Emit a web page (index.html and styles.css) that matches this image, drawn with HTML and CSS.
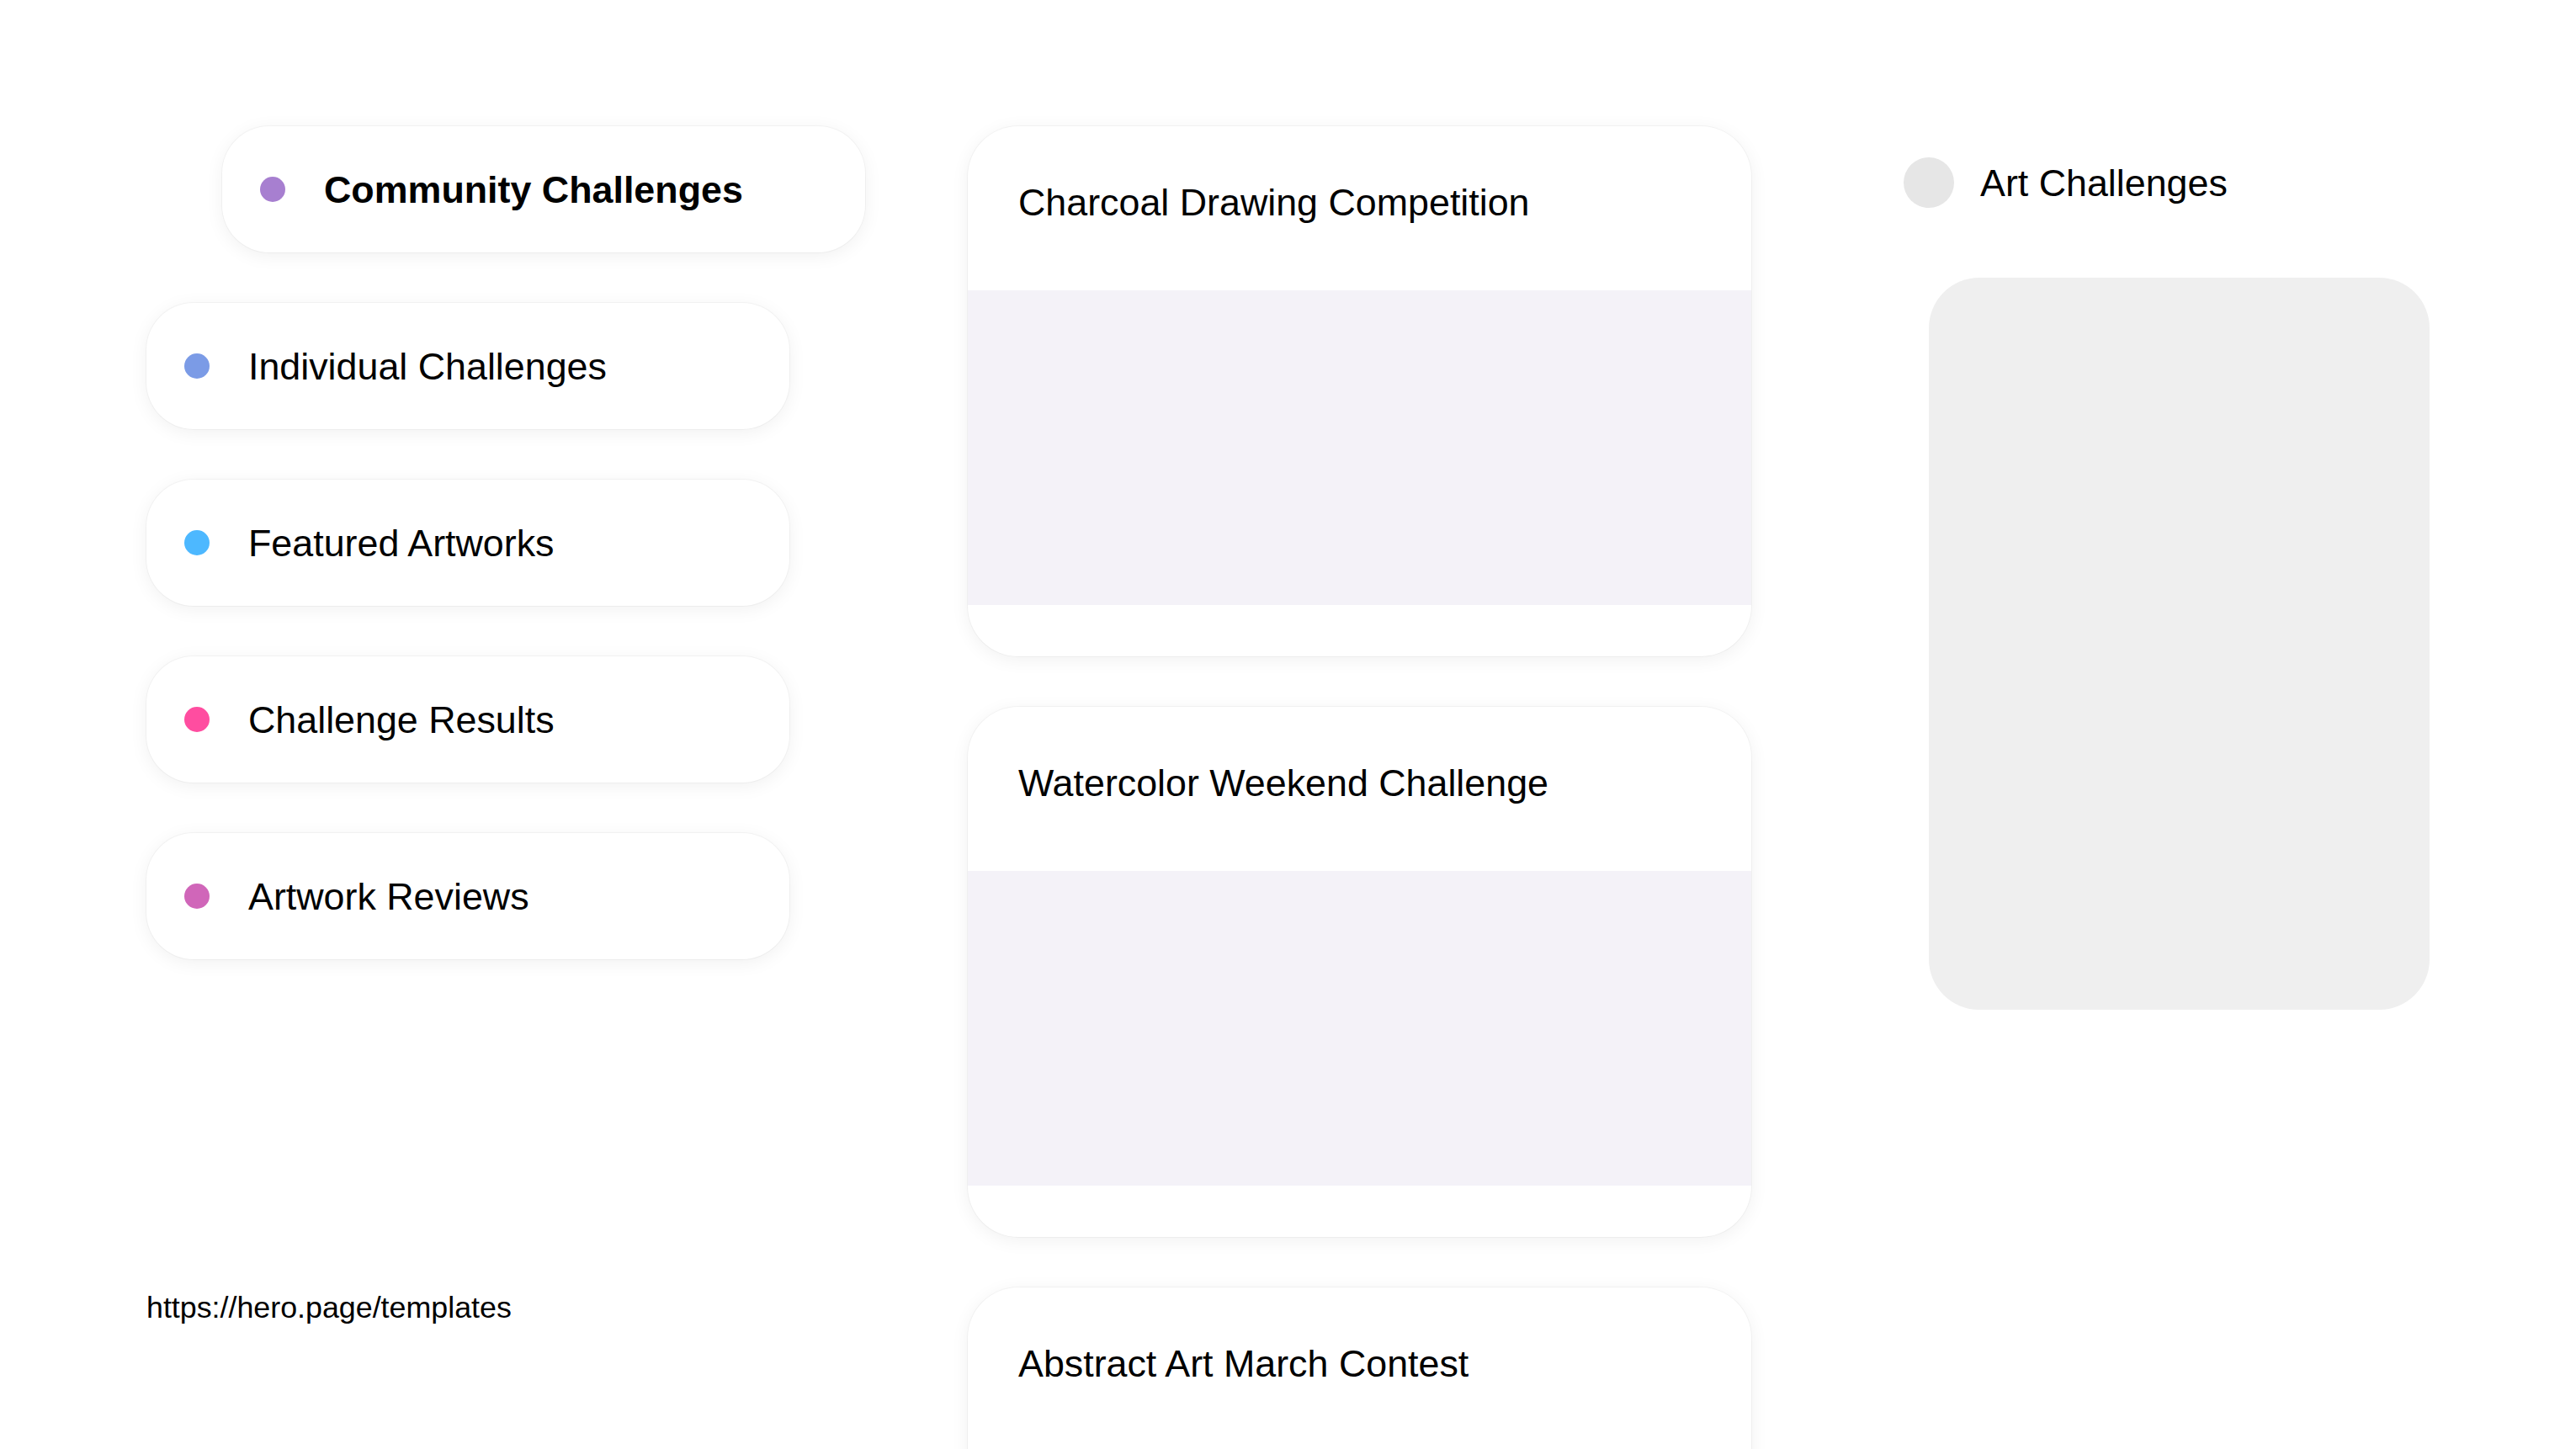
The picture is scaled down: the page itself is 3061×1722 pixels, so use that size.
FILE: index.html
```html
<!DOCTYPE html>
<html lang="en">
<head>
<meta charset="utf-8">
<title>Art Challenges</title>
<link rel="stylesheet" href="styles.css">
</head>
<body>
<div class="page">
  <div class="col-left">
    <nav class="nav">
      <div class="nav-item active"><span class="dot dot-purple"></span><span class="nav-label">Community Challenges</span></div>
      <div class="nav-item"><span class="dot dot-blue"></span><span class="nav-label">Individual Challenges</span></div>
      <div class="nav-item"><span class="dot dot-sky"></span><span class="nav-label">Featured Artworks</span></div>
      <div class="nav-item"><span class="dot dot-pink"></span><span class="nav-label">Challenge Results</span></div>
      <div class="nav-item"><span class="dot dot-magenta"></span><span class="nav-label">Artwork Reviews</span></div>
    </nav>
    <div class="footer-url">https://hero.page/templates</div>
  </div>
  <div class="col-mid">
    <div class="card">
      <div class="card-title">Charcoal Drawing Competition</div>
      <div class="card-image"></div>
      <div class="card-foot"></div>
    </div>
    <div class="card">
      <div class="card-title">Watercolor Weekend Challenge</div>
      <div class="card-image"></div>
      <div class="card-foot"></div>
    </div>
    <div class="card">
      <div class="card-title">Abstract Art March Contest</div>
      <div class="card-image"></div>
      <div class="card-foot"></div>
    </div>
  </div>
  <div class="col-right">
    <div class="side-head"><span class="avatar"></span><span class="side-title">Art Challenges</span></div>
    <div class="side-box"></div>
  </div>
</div>
</body>
</html>
```
FILE: styles.css
```css
html, body {
  margin: 0;
  padding: 0;
  background: #ffffff;
  height: 100%;
  overflow: hidden;
}
body {
  font-family: "Liberation Sans", Arial, sans-serif;
  color: #000000;
}
.page {
  display: grid;
  grid-template-columns: 795px 931px 625px;
  column-gap: 181px;
  padding: 150px 174px 0 174px;
  align-items: start;
}
.col-left {
  display: flex;
  flex-direction: column;
}
.nav {
  display: flex;
  flex-direction: column;
  gap: 60px;
}
.nav-item {
  width: 764px;
  height: 150px;
  box-sizing: border-box;
  display: flex;
  align-items: center;
  padding-left: 45px;
  gap: 46px;
  background: #ffffff;
  border-radius: 56px;
  box-shadow: 0 0 0 1px rgba(0, 0, 0, 0.035), 0 4px 22px rgba(0, 0, 0, 0.06);
  font-size: 44.8px;
}
.nav-item.active {
  margin-left: 90px;
  font-weight: bold;
}
.dot {
  width: 30px;
  height: 30px;
  border-radius: 50%;
  flex: none;
}
.dot-purple { background: #a77fd0; }
.dot-blue { background: #7b9be6; }
.dot-sky { background: #4db8ff; }
.dot-pink { background: #ff4da0; }
.dot-magenta { background: #d066b9; }
.footer-url {
  margin-top: 394px;
  font-size: 35.8px;
}
.col-mid {
  display: flex;
  flex-direction: column;
  gap: 60px;
}
.card {
  height: 630px;
  display: flex;
  flex-direction: column;
  background: #ffffff;
  border-radius: 60px;
  overflow: hidden;
  box-shadow: 0 0 0 1px rgba(0, 0, 0, 0.035), 0 4px 22px rgba(0, 0, 0, 0.06);
  flex: none;
}
.card-title {
  height: 195px;
  box-sizing: border-box;
  padding: 64px 60px 0 60px;
  font-size: 44.8px;
  line-height: 52px;
}
.card-image {
  height: 374px;
  background: #f4f2f8;
}
.card-foot {
  flex: 1;
}
.col-right {
  display: flex;
  flex-direction: column;
  padding-top: 37px;
}
.side-head {
  display: flex;
  align-items: center;
  gap: 31px;
  height: 60px;
  padding-left: 0;
}
.avatar {
  width: 60px;
  height: 60px;
  border-radius: 50%;
  background: #e6e6e6;
  flex: none;
}
.side-title {
  font-size: 44.8px;
}
.side-box {
  margin-top: 83px;
  margin-left: 30px;
  width: 595px;
  height: 870px;
  background: #efefef;
  border-radius: 60px;
}
```
